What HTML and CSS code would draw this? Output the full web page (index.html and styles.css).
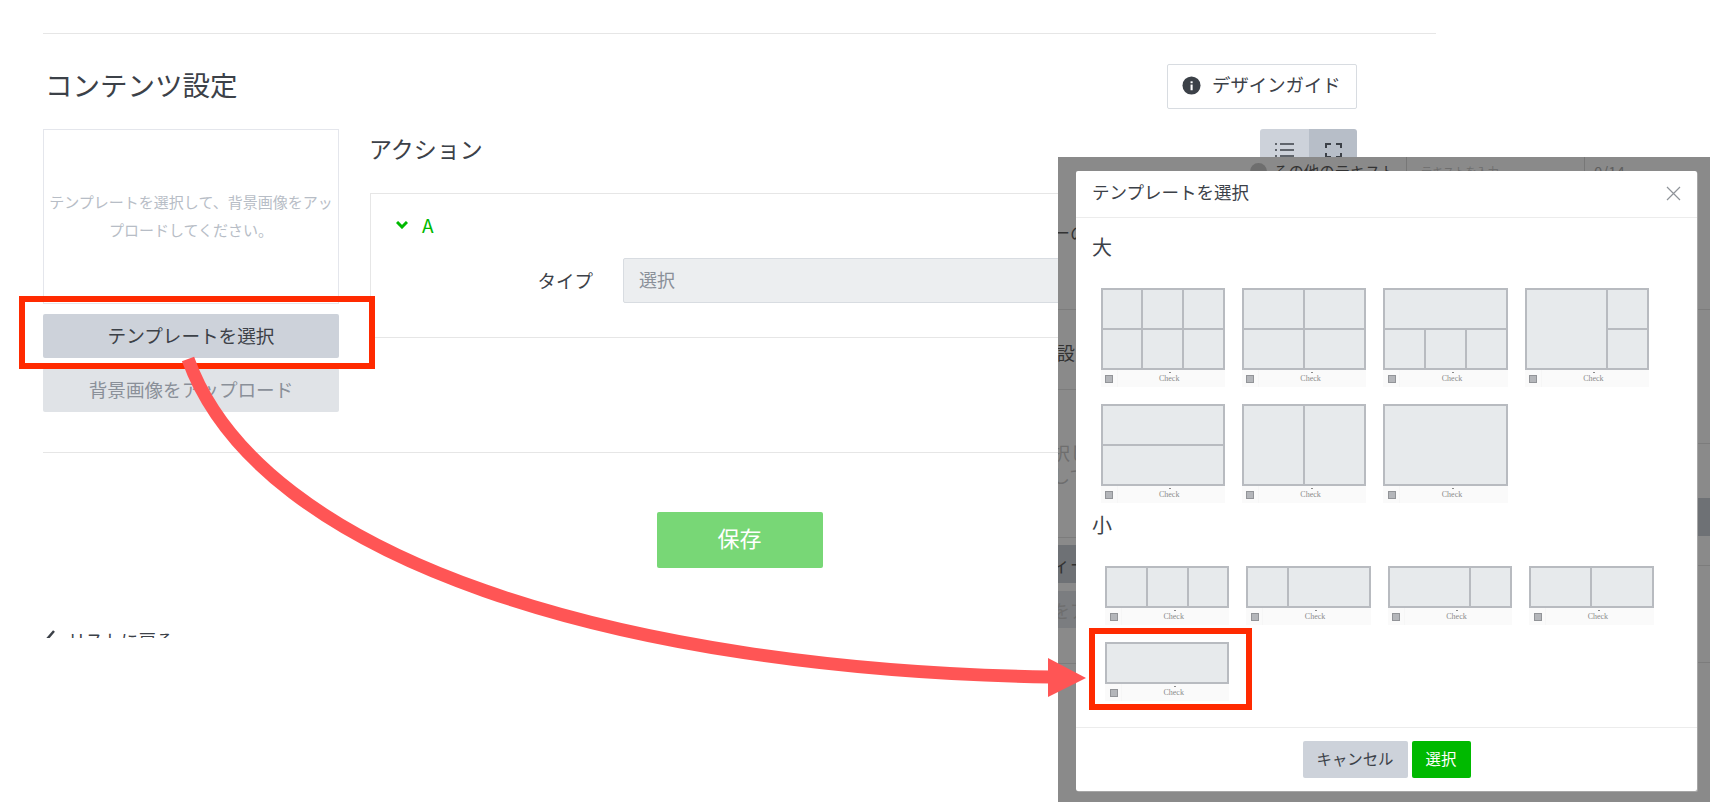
FILE: index.html
```html
<!DOCTYPE html>
<html lang="ja">
<head>
  <meta charset="utf-8">
  <title>コンテンツ設定</title>
  <link rel="stylesheet" href="styles.css">
</head>
<body>
<div class="page">

  <main class="content">
    <div class="section-head">
      <h2 class="section-title">コンテンツ設定</h2>
      <button class="guide-btn">
        <svg class="guide-icon" viewBox="0 0 20 20"><circle cx="10" cy="10" r="9.5" fill="#3c4148"/><rect x="9" y="9" width="2.2" height="6" fill="#fff"/><rect x="9" y="5.6" width="2.2" height="2" fill="#fff"/></svg>
        <span class="guide-text">デザインガイド</span>
      </button>
    </div>

    <div class="editor">
      <div class="left-col">
        <div class="preview-box">テンプレートを選択して、背景画像をアップロードしてください。</div>
        <button class="btn btn-template">テンプレートを選択</button>
        <button class="btn btn-upload">背景画像をアップロード</button>
      </div>

      <div class="right-col">
        <div class="action-head">
          <h3 class="action-title">アクション</h3>
          <div class="toggle">
            <span class="toggle-item">
              <svg width="19" height="14" viewBox="0 0 19 14" fill="none" stroke="#3c4148" stroke-width="1.7"><path d="M0 1h2M5 1h14M0 7h2M5 7h14M0 13h2M5 13h14"/></svg>
            </span>
            <span class="toggle-item toggle-on">
              <svg width="17" height="15" viewBox="0 0 17 15" fill="none" stroke="#3c4148" stroke-width="2"><path d="M1 5V1h5M11 1h5v4M16 10v4h-5M6 14H1v-4"/></svg>
            </span>
          </div>
        </div>

        <div class="action-panel">
          <div class="action-name">
            <svg width="12" height="8" viewBox="0 0 12 8" fill="none" stroke="#00b900" stroke-width="3"><path d="M1 1l5 5 5-5"/></svg>
            <span class="action-letter">A</span>
          </div>
          <div class="field">
            <label class="field-label">タイプ</label>
            <div class="select">選択</div>
          </div>
        </div>
      </div>
    </div>

    <div class="save-row">
      <button class="btn-save">保存</button>
    </div>

    <div class="back-link">
      <svg width="9" height="16" viewBox="0 0 9 16" fill="none" stroke="#3c4148" stroke-width="2.5"><path d="M8 1L2 8l6 7"/></svg>
      <span>リストに戻る</span>
    </div>
  </main>

  <!-- pasted dialog shot, has its own dimmed page behind -->
  <section class="shot">
    <div class="dim-row">
      <span class="dim-radio"></span>
      <span class="dim-label">その他のテキスト</span>
      <span class="dim-input">テキストを入力</span>
      <span class="dim-count">0/14</span>
    </div>

    <i class="dim-line dim-left" style="top:152px"></i>
    <i class="dim-line dim-left" style="top:232px"></i>
    <i class="dim-line dim-left" style="top:380px"></i>
    <i class="dim-line dim-left" style="top:506px"></i>
    <i class="dim-line dim-right" style="top:152px"></i>
    <i class="dim-line dim-right" style="top:286px"></i>
    <i class="dim-line dim-right" style="top:408px"></i>
    <i class="dim-line dim-right" style="top:505px"></i>

    <span class="dim-band dim-left" style="top:388px;height:38px"></span>
    <span class="dim-band dim-band-light dim-left" style="top:434px;height:37px"></span>
    <span class="dim-band dim-right" style="top:341px;height:38px"></span>

    <span class="dim-text" style="top:63px">ーの</span>
    <span class="dim-text" style="top:183px">'設</span>
    <span class="dim-text dim-faint" style="top:283px">択し</span>
    <span class="dim-text dim-faint" style="top:306px">して</span>
    <span class="dim-text" style="top:395px">ィー</span>
    <span class="dim-text dim-faint" style="top:441px">をア</span>

    <div class="modal">
      <header class="modal-head">
        <span class="modal-title">テンプレートを選択</span>
        <svg class="modal-close" width="15" height="15" viewBox="0 0 15 15" stroke="#8f9399" stroke-width="1.2"><path d="M1 1l13 13M14 1L1 14"/></svg>
      </header>

      <div class="modal-body">
        <h4 class="size-title">大</h4>
        <div class="tpl-grid">
          <div class="tpl">
            <div class="tpl-img"><i></i><i></i><i></i><i></i><i></i><i></i></div>
            <div class="tpl-foot"><b></b><span>Check</span></div>
          </div>
          <div class="tpl">
            <div class="tpl-img cols-2"><i></i><i></i><i></i><i></i></div>
            <div class="tpl-foot"><b></b><span>Check</span></div>
          </div>
          <div class="tpl">
            <div class="tpl-img"><i class="span-3"></i><i></i><i></i><i></i></div>
            <div class="tpl-foot"><b></b><span>Check</span></div>
          </div>
          <div class="tpl">
            <div class="tpl-img"><i class="span-2 row-2"></i><i></i><i></i></div>
            <div class="tpl-foot"><b></b><span>Check</span></div>
          </div>
          <div class="tpl">
            <div class="tpl-img cols-1"><i></i><i></i></div>
            <div class="tpl-foot"><b></b><span>Check</span></div>
          </div>
          <div class="tpl">
            <div class="tpl-img cols-2"><i></i><i></i></div>
            <div class="tpl-foot"><b></b><span>Check</span></div>
          </div>
          <div class="tpl">
            <div class="tpl-img cols-1"><i></i></div>
            <div class="tpl-foot"><b></b><span>Check</span></div>
          </div>
        </div>

        <h4 class="size-title size-small">小</h4>
        <div class="tpl-grid tpl-grid-small">
          <div class="tpl">
            <div class="tpl-img"><i></i><i></i><i></i></div>
            <div class="tpl-foot"><b></b><span>Check</span></div>
          </div>
          <div class="tpl">
            <div class="tpl-img"><i></i><i class="span-2"></i></div>
            <div class="tpl-foot"><b></b><span>Check</span></div>
          </div>
          <div class="tpl">
            <div class="tpl-img"><i class="span-2"></i><i></i></div>
            <div class="tpl-foot"><b></b><span>Check</span></div>
          </div>
          <div class="tpl">
            <div class="tpl-img cols-2"><i></i><i></i></div>
            <div class="tpl-foot"><b></b><span>Check</span></div>
          </div>
          <div class="tpl">
            <div class="tpl-img cols-1"><i></i></div>
            <div class="tpl-foot"><b></b><span>Check</span></div>
          </div>
        </div>
      </div>

      <footer class="modal-foot">
        <button class="btn-cancel">キャンセル</button>
        <button class="btn-ok">選択</button>
      </footer>
    </div>
  </section>

  <!-- red annotations on top of everything -->
  <div class="mark mark-template"></div>
  <div class="mark mark-small"></div>
  <svg class="arrow" width="1710" height="802" viewBox="0 0 1710 802">
    <path d="M188 359C260 560 620 670 1050 677" fill="none" stroke="#ff5555" stroke-width="13"/>
    <path d="M1048 658L1086 678L1048 697Z" fill="#ff5555"/>
  </svg>

</div>
</body>
</html>
```

FILE: styles.css
```css
* {
  box-sizing: border-box;
}

body {
  margin: 0;
  background: #fff;
  font-family: "Noto Sans CJK JP", "Noto Sans", sans-serif;
  color: #3c4148;
}

button {
  font-family: inherit;
  cursor: pointer;
}

.page {
  position: relative;
  width: 1710px;
  height: 802px;
  overflow: hidden;
}

/* main page */
.content {
  width: 1393px;
  margin-left: 43px;
  padding-top: 33px;
}

.section-head {
  display: flex;
  justify-content: space-between;
  align-items: center;
  height: 76px;
  padding: 30px 79px 0 2px;
  border-top: 1px solid #e6e6e6;
}

.section-title {
  margin: 0 0 5px;
  font-size: 27.5px;
  font-weight: 400;
  line-height: 40px;
}

.guide-btn {
  display: flex;
  align-items: center;
  gap: 11px;
  width: 190px;
  height: 45px;
  padding: 0 0 0 14px;
  background: #fff;
  border: 1px solid #d8dce1;
  border-radius: 2px;
  font-size: 18.4px;
  color: #3c4148;
}

.guide-icon {
  width: 19px;
  height: 19px;
  margin-bottom: 2px;
}

.guide-text {
  margin-bottom: 5px;
}

.editor {
  display: flex;
  gap: 31px;
  margin-top: 20px;
  padding-bottom: 40px;
  border-bottom: 1px solid #e6e6e6;
}

.left-col {
  display: flex;
  flex-direction: column;
  gap: 10px;
  width: 296px;
  flex: none;
}

.preview-box {
  display: flex;
  align-items: center;
  height: 175px;
  padding: 0 4px 2px;
  border: 1px solid #e4e6ec;
  text-align: center;
  font-size: 15px;
  line-height: 28px;
  color: #b7bdc6;
}

.btn {
  height: 44px;
  padding: 0 0 4px;
  border: 0;
  border-radius: 2px;
  font-size: 18.6px;
}

.btn-template {
  background: #cdd2da;
  color: #3c4148;
}

.btn-upload {
  background: #e0e3e7;
  color: #8a9099;
}

.right-col {
  width: 987px;
}

.action-head {
  display: flex;
  justify-content: space-between;
  height: 64px;
}

.action-title {
  margin: 0 0 0 -1px;
  font-size: 23px;
  font-weight: 400;
  line-height: 38px;
}

.toggle {
  display: flex;
  height: 44px;
  border-radius: 3px 3px 0 0;
  overflow: hidden;
}

.toggle-item {
  display: flex;
  justify-content: center;
  align-items: flex-start;
  width: 49px;
  padding-top: 14px;
  background: #cdd2da;
}

.toggle-on {
  width: 48px;
  background: #b7bec8;
}

.action-panel {
  height: 145px;
  padding-top: 20px;
  border: 1px solid #e6e6e6;
  border-right: 0;
}

.action-name {
  display: flex;
  align-items: center;
  gap: 14px;
  height: 22px;
  padding-left: 25px;
  font-size: 19px;
  color: #00b900;
}

.action-letter {
  margin-bottom: 2px;
}

.field {
  display: flex;
  gap: 30px;
  align-items: center;
  margin-top: 22px;
}

.field-label {
  width: 222px;
  margin-bottom: 2px;
  text-align: right;
  font-size: 18.5px;
}

.select {
  flex: 1;
  height: 45px;
  padding-left: 15px;
  background: #eceef0;
  border: 1px solid #d8dce1;
  border-radius: 2px;
  font-size: 18px;
  line-height: 40px;
  color: #8a9099;
}

.save-row {
  display: flex;
  justify-content: center;
  margin-top: 59px;
}

.btn-save {
  width: 166px;
  height: 56px;
  padding: 0 0 6px;
  background: #78d776;
  border: 0;
  border-radius: 2px;
  font-size: 22px;
  color: #fff;
}

.back-link {
  display: flex;
  align-items: flex-start;
  gap: 13px;
  height: 8px;
  margin-top: 62px;
  padding-left: 3px;
  overflow: hidden;
  font-size: 17.6px;
  line-height: 20px;
}

/* pasted dialog */
.shot {
  position: absolute;
  left: 1058px;
  top: 157px;
  width: 652px;
  height: 645px;
  padding: 14px 13px 11px 18px;
  background: #8a8a8a;
  overflow: hidden;
}

.dim-row {
  position: absolute;
  left: 192px;
  top: 0;
  display: flex;
  align-items: center;
  width: 460px;
  height: 28px;
  color: #333;
}

.dim-radio {
  width: 17px;
  height: 17px;
  margin-right: 6px;
  border-radius: 50%;
  background: #6e6e6e;
}

.dim-label {
  width: 133px;
  font-size: 15.4px;
}

.dim-input {
  width: 179px;
  height: 28px;
  padding-left: 14px;
  border-left: 1px solid #777;
  border-right: 1px solid #777;
  font-size: 11.2px;
  line-height: 28px;
  color: #6e6e6e;
}

.dim-count {
  padding-left: 9px;
  font-size: 15px;
  color: #5f5f5f;
}

.dim-line {
  position: absolute;
  height: 1px;
  background: #7c7c7c;
}

.dim-left {
  left: 0;
  width: 18px;
}

.dim-right {
  left: 639px;
  width: 13px;
}

.dim-band {
  position: absolute;
  background: #6e7175;
}

.dim-band-light {
  background: #7b7d80;
}

.dim-text {
  position: absolute;
  left: -6px;
  font-size: 18px;
  line-height: 24px;
  color: #333;
}

.dim-faint {
  color: #6e6e6e;
}

.modal {
  position: relative;
  display: flex;
  flex-direction: column;
  height: 620px;
  background: #fff;
  border-radius: 2px;
  box-shadow: 1px 1px 0 #a6a6a6;
}

.modal-head {
  display: flex;
  justify-content: space-between;
  align-items: center;
  flex: none;
  height: 47px;
  padding: 0 16px;
  border-bottom: 1px solid #ececec;
}

.modal-title {
  padding-bottom: 6px;
  font-size: 17.5px;
}

.modal-close {
  margin-bottom: 1px;
}

.modal-body {
  flex: 1;
  padding: 14px 0 0 16px;
}

.size-title {
  margin: 0 0 26px;
  font-size: 20px;
  font-weight: 400;
  line-height: 30px;
}

.size-small {
  margin: 7px 0 26px;
}

.tpl-grid {
  display: grid;
  grid-template-columns: repeat(4, 124.4px);
  column-gap: 17px;
  row-gap: 17px;
  padding-left: 8.5px;
}

.tpl-grid-small {
  padding-left: 13px;
}

.tpl-img {
  display: grid;
  grid-template-columns: repeat(3, 1fr);
  grid-auto-rows: 1fr;
  gap: 2px;
  height: 82px;
  padding: 2px;
  background: #b8bbc0;
}

.tpl-grid-small .tpl-img {
  height: 42px;
}

.tpl-img i {
  background: #e7eaec;
}

.tpl-img.cols-2 {
  grid-template-columns: repeat(2, 1fr);
}

.tpl-img.cols-1 {
  grid-template-columns: 1fr;
}

.span-2 {
  grid-column: span 2;
}

.span-3 {
  grid-column: span 3;
}

.row-2 {
  grid-row: span 2;
}

.tpl-foot {
  display: grid;
  grid-template-columns: 17px 1fr;
  align-items: center;
  justify-items: center;
  height: 17px;
  background: linear-gradient(90deg, #fafafa 16px, #f6f6f6 16px, #f6f6f6 17px, #fafafa 17px);
}

.tpl-foot b {
  width: 8px;
  height: 8px;
  background: #b4b6ba;
  border: 1px solid #929498;
}

.tpl-foot span {
  position: relative;
  margin-right: 4px;
  font-family: "Liberation Serif", serif;
  font-size: 8px;
  line-height: 10px;
  color: #8a8a8a;
}

.tpl-foot span::before {
  content: "";
  position: absolute;
  left: 50%;
  top: -2px;
  width: 2px;
  height: 1px;
  background: #8a8a8a;
}

.modal-foot {
  display: flex;
  justify-content: center;
  align-items: center;
  gap: 4px;
  flex: none;
  height: 64px;
  border-top: 1px solid #ececec;
}

.btn-cancel,
.btn-ok {
  height: 37px;
  padding: 0 0 4px;
  border: 0;
  border-radius: 2px;
  font-size: 15.4px;
}

.btn-cancel {
  width: 105px;
  background: #cdd2da;
  color: #3c4148;
}

.btn-ok {
  width: 59px;
  background: #00b900;
  color: #fff;
}

/* annotations */
.mark {
  position: absolute;
  border: 6px solid #ff2a00;
}

.mark-template {
  left: 19px;
  top: 296px;
  width: 356px;
  height: 73px;
}

.mark-small {
  left: 1089px;
  top: 628px;
  width: 163px;
  height: 82px;
}

.arrow {
  position: absolute;
  left: 0;
  top: 0;
  pointer-events: none;
}
```
